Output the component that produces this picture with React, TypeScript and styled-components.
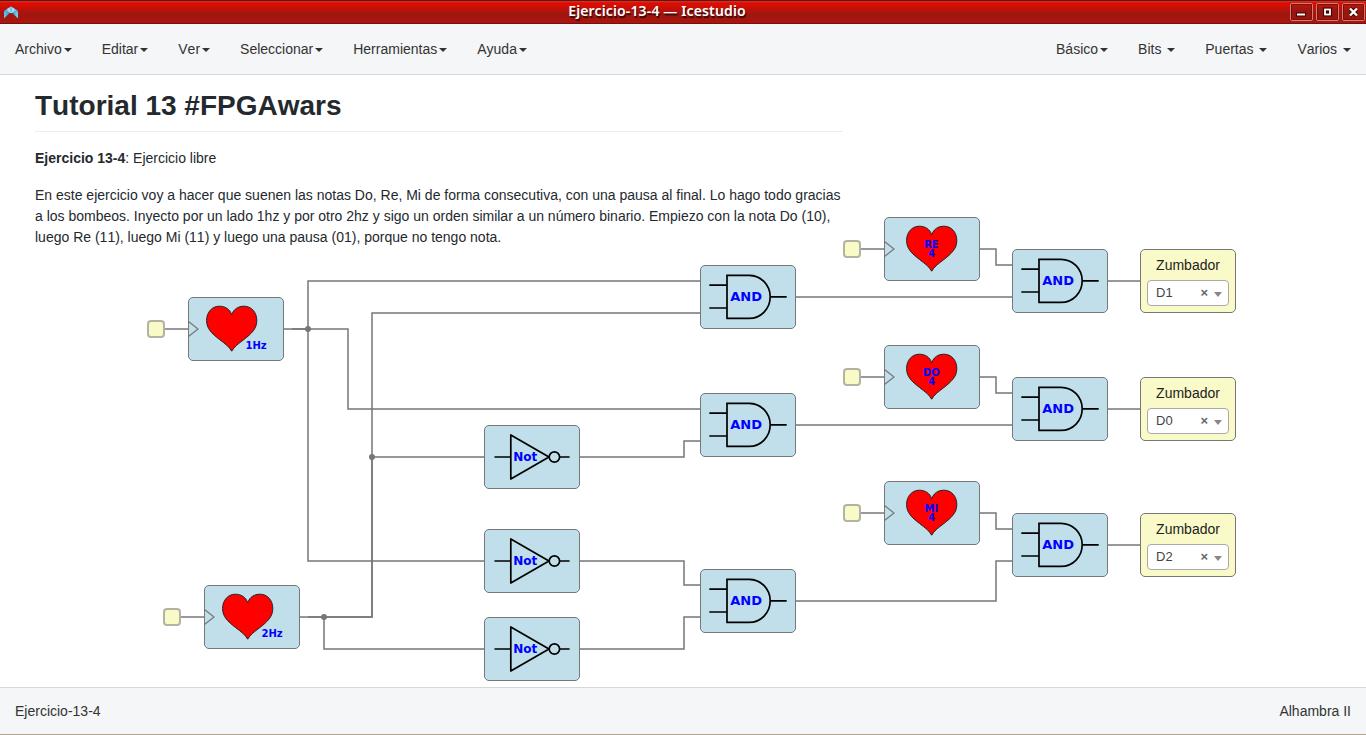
import React from 'react';
import styled, { createGlobalStyle } from 'styled-components';

const GlobalStyle = createGlobalStyle`
  * { box-sizing: border-box; }
  body { margin: 0; background: #fff; overflow: hidden; }
`;

const Window = styled.div`
  display: flex;
  flex-direction: column;
  height: 100vh;
  font: 14px/20px "Liberation Sans", Arial, sans-serif;
  font-kerning: none;
  color: #333;
  background: #fff;
`;

const TitleBar = styled.header`
  display: grid;
  grid-template-columns: 1fr auto 1fr;
  align-items: center;
  flex: 0 0 24px;
  padding: 0 1px 0 3px;
  border-top: 1px solid #42201c;
  border-bottom: 1px solid #6b1512;
  background: linear-gradient(#ee2a1c 0, #dd0d02 2px, #d40d03 5px, #a3170f 12px, #9e1710 14px, #ad140c 100%);
`;

const AppLogo = styled.svg`
  display: block;
  width: 16px;
  height: 14px;
  margin-top: 2px;
`;

const WindowTitle = styled.span`
  margin: 0 54px 2px 0;
  font: 600 14px/20px "Noto Sans", "Open Sans", sans-serif;
  letter-spacing: 0.14px;
  color: #fff;
  text-shadow: 1px 2px 1px #2c0806;
  white-space: nowrap;
`;

const WindowControls = styled.div`
  display: flex;
  justify-content: flex-end;
  gap: 3px;
`;

const ControlButton = styled.button`
  display: block;
  width: 23px;
  height: 18px;
  padding: 0;
  border: 1px solid #cf7d77;
  border-radius: 2px;
  outline: 1px solid #78100b;
  outline-offset: -2px;
  background: linear-gradient(#bd160d, #931710 50%, #a0120b);
  svg { display: block; }
`;

const MenuBar = styled.nav`
  display: flex;
  justify-content: space-between;
  flex: 0 0 51px;
  border-bottom: 1px solid #d5d8db;
  background: #f5f6f8;
`;

const MenuGroup = styled.div`
  display: flex;
`;

const MenuItem = styled.span`
  display: flex;
  align-items: center;
  padding: 0 15px;
  white-space: pre;
`;

const Caret = styled.i`
  margin: 2px 0 0 2px;
  border: 4px solid transparent;
  border-top-color: #333;
  border-bottom: 0;
`;

const Canvas = styled.main`
  position: relative;
  flex: 1;
  overflow: hidden;
`;

const Notes = styled.article`
  width: 808px;
  margin-left: 35px;
  padding-top: 13px;
  color: #24292e;
  line-height: 21px;
`;

const Heading = styled.h1`
  margin: 0 0 16px;
  padding-bottom: 8px;
  border-bottom: 1px solid #eaecef;
  font-size: 28px;
  line-height: 35px;
`;

const Paragraph = styled.p`
  margin: 0 0 16px;
`;

const Wires = styled.svg`
  position: absolute;
  left: 0;
  top: 0;
  width: 1366px;
  height: 612px;
  fill: none;
  stroke: #777;
  stroke-width: 1.5;
`;

const Block = styled.div<{ $x: number; $y: number; $yellow?: boolean }>`
  position: absolute;
  left: ${p => p.$x}px;
  top: ${p => p.$y}px;
  width: 96px;
  height: 64px;
  border: 1px solid #777;
  border-radius: 5px;
  background: ${p => (p.$yellow ? '#fafac8' : '#c0dfea')};
`;

const Symbol = styled.svg`
  display: block;
  width: 96px;
  height: 64px;
  margin: -1px;
  text {
    font-family: "DejaVu Sans", sans-serif;
    font-weight: bold;
    fill: #00f;
    text-anchor: middle;
  }
`;

const Port = styled.div<{ $x: number; $y: number }>`
  position: absolute;
  left: ${p => p.$x}px;
  top: ${p => p.$y}px;
  width: 18px;
  height: 18px;
  border: 2px solid #b4b3a3;
  border-radius: 4px;
  background: #fafac8;
`;

const PinLabel = styled.div`
  padding-top: 5px;
  text-align: center;
  color: #222;
`;

const PinSelect = styled.div`
  display: flex;
  align-items: center;
  width: 82px;
  height: 26px;
  margin: 5px 0 0 6px;
  padding: 0 6px 0 8px;
  border: 1px solid #aaa;
  border-radius: 4px;
  background: #fff;
  font-size: 13px;
  color: #444;
`;

const ClearMark = styled.b`
  margin: 0 6px 0 auto;
  font-size: 13px;
  line-height: 20px;
  color: #666;
`;

const SelectArrow = styled.i`
  margin-top: 3px;
  border: 4px solid transparent;
  border-top: 5px solid #888;
  border-bottom: 0;
`;

const StatusBar = styled.footer`
  display: flex;
  justify-content: space-between;
  align-items: center;
  flex: 0 0 48px;
  padding: 0 15px;
  border-top: 1px solid #d5d8db;
  border-bottom: 1px solid #b0a595;
  background: #f5f6f8;
`;

const leftMenus = ['Archivo', 'Editar', 'Ver', 'Seleccionar', 'Herramientas', 'Ayuda'];
const rightMenus = ['Básico', 'Bits ', 'Puertas ', 'Varios '];

const wires = [
  'M164 254H188', 'M180 542H204', 'M860 174H884', 'M860 302H884', 'M860 438H884',
  'M284 254H308V206H700',
  'M292 254H348V334H700',
  'M308 254V486H484',
  'M300 542H372V238H700',
  'M308 542H372V382H484',
  'M324 542V574H484',
  'M580 382H684V366H700',
  'M580 486H684V510H700',
  'M580 574H684V542H700',
  'M796 222H1012', 'M796 350H1012', 'M796 526H996V486H1012',
  'M980 174H996V190H1012', 'M980 302H996V318H1012', 'M980 438H996V454H1012',
  'M1108 206H1140', 'M1108 334H1140', 'M1108 470H1140',
];
const junctions = [[308, 254], [372, 382], [324, 542]];

const pulses = [
  { x: 188, y: 222, label: '1Hz' },
  { x: 204, y: 510, label: '2Hz' },
];
const notes = [
  { x: 884, y: 142, label: 'RE' },
  { x: 884, y: 270, label: 'DO' },
  { x: 884, y: 406, label: 'MI' },
];
const andGates = [[700, 190], [700, 318], [700, 494], [1012, 174], [1012, 302], [1012, 438]];
const notGates = [[484, 350], [484, 454], [484, 542]];
const outputs = [
  { y: 174, pin: 'D1' },
  { y: 302, pin: 'D0' },
  { y: 438, pin: 'D2' },
];

const Menu = ({ items }: { items: string[] }) => (
  <MenuGroup>
    {items.map(name => <MenuItem key={name}>{name}<Caret /></MenuItem>)}
  </MenuGroup>
);

const HeartShape = ({ dx = 0 }: { dx?: number }) => (
  <>
    <path d="M0.5 24.5L10 32L0.5 39.5" fill="none" stroke="#777" strokeWidth="1.2" />
    <path
      transform={`translate(${dx} 0)`}
      d="M43.7 54.2C41.5 50 37 46.7 31.5 42.5C23.5 36.3 18.6 31.5 18.6 23.5C18.6 15 24.3 9.2 31.3 9.2C37 9.2 41.8 12 43.7 17.8C45.6 12 50.4 9.2 56.1 9.2C63.1 9.2 68.8 15 68.8 23.5C68.8 31.5 63.9 36.3 55.9 42.5C50.4 46.7 45.9 50 43.7 54.2Z"
      fill="#f00" stroke="#222" strokeWidth="1"
    />
  </>
);

const AndGate = ({ x, y }: { x: number; y: number }) => (
  <Block $x={x} $y={y}>
    <Symbol>
      <path
        d="M9.3 20.2H27M9.3 43H27M27 10.4H49C61 10.4 70.2 20 70.2 31.8C70.2 43.8 61 53.4 49 53.4H27ZM70.2 31.8H86.7"
        fill="none" stroke="#000" strokeWidth="1.7"
      />
      <text x="46.1" y="36" fontSize="13">AND</text>
    </Symbol>
  </Block>
);

const NotGate = ({ x, y }: { x: number; y: number }) => (
  <Block $x={x} $y={y}>
    <Symbol>
      <g fill="none" stroke="#000" strokeWidth="1.7">
        <path d="M10.5 32H26.8M75.6 32H85.6M26.8 10V54L65 32Z" strokeLinejoin="round" />
        <circle cx="70.4" cy="32" r="5.2" />
      </g>
      <text x="41.3" y="36.2" fontSize="12">Not</text>
    </Symbol>
  </Block>
);

export default function App() {
  return (
    <Window>
      <GlobalStyle />
      <TitleBar>
        <AppLogo viewBox="0 0 16 14">
          <path d="M1 5L7.5 1L6.5 7L1 12.5Z" fill="#63bce8" />
          <path d="M15 5L8.5 1L9.5 7L15 12.5Z" fill="#72c9ef" />
          <path d="M4 3L8 .5L12 3L9.5 7H6.5Z" fill="#9be0f7" />
          <path d="M1 5L6.5 7L3 8.5M15 5L9.5 7L13 8.5M8 .5V6" fill="none" stroke="#2c7fae" strokeWidth=".6" />
        </AppLogo>
        <WindowTitle>Ejercicio-13-4 — Icestudio</WindowTitle>
        <WindowControls>
          <ControlButton aria-label="Minimizar">
            <svg width="21" height="16"><path d="M5 10.5H15" stroke="#400" strokeWidth="4" /><path d="M6 10.5H14" stroke="#fff" strokeWidth="2" /></svg>
          </ControlButton>
          <ControlButton aria-label="Maximizar">
            <svg width="21" height="16"><rect x="8" y="5.5" width="5" height="5" fill="none" stroke="#400" strokeWidth="4" /><rect x="8" y="5.5" width="5" height="5" fill="none" stroke="#fff" strokeWidth="1.8" /></svg>
          </ControlButton>
          <ControlButton aria-label="Cerrar">
            <svg width="21" height="16"><path d="M7 4.5L14 11.5M14 4.5L7 11.5" stroke="#400" strokeWidth="4" /><path d="M7 4.5L14 11.5M14 4.5L7 11.5" stroke="#fff" strokeWidth="2.4" /></svg>
          </ControlButton>
        </WindowControls>
      </TitleBar>
      <MenuBar>
        <Menu items={leftMenus} />
        <Menu items={rightMenus} />
      </MenuBar>
      <Canvas>
        <Notes>
          <Heading>Tutorial 13 #FPGAwars</Heading>
          <Paragraph><b>Ejercicio 13-4</b>: Ejercicio libre</Paragraph>
          <Paragraph>
            En este ejercicio voy a hacer que suenen las notas Do, Re, Mi de forma consecutiva, con una pausa al final. Lo hago todo gracias a los bombeos. Inyecto por un lado 1hz y por otro 2hz y sigo un orden similar a un número binario. Empiezo con la nota Do (10), luego Re (11), luego Mi (11) y luego una pausa (01), porque no tengo nota.
          </Paragraph>
        </Notes>
        <Wires>
          {wires.map(d => <path key={d} d={d} />)}
          {junctions.map(([x, y]) => <circle key={x} cx={x} cy={y} r="3" fill="#777" stroke="none" />)}
        </Wires>
        <Port $x={147} $y={245} />
        <Port $x={163} $y={533} />
        {notes.map(n => <Port key={n.label} $x={843} $y={n.y + 23} />)}
        {pulses.map(p => (
          <Block key={p.label} $x={p.x} $y={p.y}>
            <Symbol>
              <HeartShape />
              <text x="68.1" y="52" fontSize="10">{p.label}</text>
            </Symbol>
          </Block>
        ))}
        {notes.map(n => (
          <Block key={n.label} $x={n.x} $y={n.y}>
            <Symbol>
              <HeartShape dx={4} />
              <text x="47.4" y="31" fontSize="10">{n.label}</text>
              <text x="47.7" y="40.4" fontSize="10">4</text>
            </Symbol>
          </Block>
        ))}
        {andGates.map(([x, y]) => <AndGate key={`${x}-${y}`} x={x} y={y} />)}
        {notGates.map(([x, y]) => <NotGate key={y} x={x} y={y} />)}
        {outputs.map(o => (
          <Block key={o.pin} $x={1140} $y={o.y} $yellow>
            <PinLabel>Zumbador</PinLabel>
            <PinSelect>{o.pin}<ClearMark>×</ClearMark><SelectArrow /></PinSelect>
          </Block>
        ))}
      </Canvas>
      <StatusBar>
        <span>Ejercicio-13-4</span>
        <span>Alhambra II</span>
      </StatusBar>
    </Window>
  );
}
